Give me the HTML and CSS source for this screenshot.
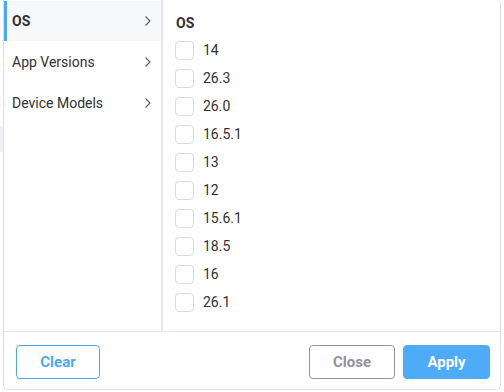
FILE: index.html
```html
<!DOCTYPE html>
<html>
<head>
<meta charset="utf-8">
<link rel="stylesheet" href="styles.css">
</head>
<body>
<div class="page">
  <div class="peek"><div class="peek-band"></div></div>
  <div class="panel">
    <div class="main">
      <div class="side">
        <div class="side-item active"><span>OS</span><svg class="chev" width="8" height="12" viewBox="0 0 8 12"><path d="M1.5 1.5 L6 6 L1.5 10.5" fill="none" stroke="#606266" stroke-width="1.2"/></svg></div>
        <div class="side-item"><span>App Versions</span><svg class="chev" width="8" height="12" viewBox="0 0 8 12"><path d="M1.5 1.5 L6 6 L1.5 10.5" fill="none" stroke="#606266" stroke-width="1.2"/></svg></div>
        <div class="side-item"><span>Device Models</span><svg class="chev" width="8" height="12" viewBox="0 0 8 12"><path d="M1.5 1.5 L6 6 L1.5 10.5" fill="none" stroke="#606266" stroke-width="1.2"/></svg></div>
      </div>
      <div class="content">
        <div class="title">OS</div>
        <label class="row"><span class="box"></span><span class="lbl">14</span></label>
        <label class="row"><span class="box"></span><span class="lbl">26.3</span></label>
        <label class="row"><span class="box"></span><span class="lbl">26.0</span></label>
        <label class="row"><span class="box"></span><span class="lbl">16.5.1</span></label>
        <label class="row"><span class="box"></span><span class="lbl">13</span></label>
        <label class="row"><span class="box"></span><span class="lbl">12</span></label>
        <label class="row"><span class="box"></span><span class="lbl">15.6.1</span></label>
        <label class="row"><span class="box"></span><span class="lbl">18.5</span></label>
        <label class="row"><span class="box"></span><span class="lbl">16</span></label>
        <label class="row"><span class="box"></span><span class="lbl">26.1</span></label>
      </div>
    </div>
    <div class="footer">
      <button class="btn btn-clear">Clear</button>
      <div class="spacer"></div>
      <button class="btn btn-close">Close</button>
      <button class="btn btn-apply">Apply</button>
    </div>
  </div>
</div>
</body>
</html>
```

FILE: styles.css
```css
html, body {
  margin: 0;
  padding: 0;
  background: #ffffff;
  font-family: Roboto, "Liberation Sans", Arial, sans-serif;
}
.page {
  display: flex;
  width: 504px;
  height: 392px;
}
.peek {
  width: 3px;
  flex: none;
}
.peek-band {
  margin-top: 126px;
  height: 26px;
  background: #eef0f3;
}
.panel {
  width: 498px;
  height: 390px;
  box-sizing: border-box;
  border: 1px solid #dcdfe6;
  border-top: none;
  border-radius: 0 4px 5px 5px;
  display: flex;
  flex-direction: column;
  background: #fff;
  overflow: hidden;
}
.main {
  display: flex;
  height: 331px;
  flex: none;
}
.side {
  width: 157px;
  flex: none;
  border-right: 2px solid #e4e7ed;
  padding-top: 1px;
  display: flex;
  flex-direction: column;
  gap: 1px;
}
.side-item {
  height: 40px;
  display: flex;
  align-items: center;
  justify-content: space-between;
  padding: 0 9px 0 5px;
  border-left: 3px solid transparent;
  font-size: 14px;
  color: #303133;
}
.side-item.active {
  background: #f7f8fa;
  border-left-color: #4aa8f5;
  font-weight: bold;
}
.chev {
  display: block;
}
.content {
  flex: 1;
  padding: 12px 0 0 12px;
}
.title {
  font-size: 14px;
  font-weight: bold;
  color: #303133;
  line-height: 22px;
  margin-bottom: 2px;
  padding-left: 1px;
}
.row {
  height: 28px;
  display: flex;
  align-items: center;
}
.box {
  width: 19px;
  height: 19px;
  box-sizing: border-box;
  border: 1px solid #d8dbe1;
  border-radius: 4px;
  background: #fff;
  margin-right: 9px;
}
.lbl {
  font-size: 14px;
  color: #303133;
}
.footer {
  flex: 1;
  border-top: 1px solid #e4e7ed;
  display: flex;
  align-items: flex-start;
  padding: 13px 10px 0 12px;
}
.spacer {
  flex: 1;
}
.btn {
  height: 34px;
  box-sizing: border-box;
  border-radius: 4px;
  font-family: Roboto, "Liberation Sans", Arial, sans-serif;
  font-size: 15px;
  font-weight: bold;
  padding: 0;
  background: #fff;
}
.btn-clear {
  width: 84px;
  border: 1px solid #4aa8f5;
  color: #4aa8f5;
}
.btn-close {
  width: 86px;
  border: 1px solid #909399;
  color: #909399;
  margin-right: 8px;
}
.btn-apply {
  width: 87px;
  border: 1px solid #4dabf7;
  background: #4dabf7;
  color: #fff;
}
```
